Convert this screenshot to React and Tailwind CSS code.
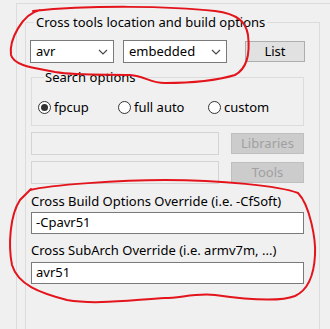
import React from 'react';

const Chevron = () => (
    <svg width="10" height="6" viewBox="0 0 10 6" className="shrink-0">
        <polyline points="1,1 5,5 9,1" fill="none" stroke="#444" strokeWidth="1.1" />
    </svg>
);

const Combo = ({ value, width }) => (
    <div className={`flex items-center justify-between h-[23px] ${width} bg-white border border-[#7a7a7a] pl-[5px] pr-[5px]`}>
        <span>{value}</span>
        <Chevron />
    </div>
);

const Radio = ({ checked, label, width }) => (
    <label className={`flex items-center ${width}`}>
        <span className="w-[13px] h-[13px] rounded-full border border-[#333] bg-white flex items-center justify-center shrink-0">
            {checked && <span className="w-[7px] h-[7px] rounded-full bg-[#333]" />}
        </span>
        <span className="ml-[3px]">{label}</span>
    </label>
);

const DisabledRow = ({ label }) => (
    <div className="flex items-center">
        <div className="w-[188px] h-[23px] border border-[#d4d4d4] bg-[#f0f0f0]" />
        <button className="ml-[12px] w-[73px] h-[21px] bg-[#cccccc] border border-[#bfbfbf] text-[#a0a0a0] leading-none">
            {label}
        </button>
    </div>
);

const App = () => {
    return (
        <div className="relative w-[330px] h-[329px] overflow-hidden bg-[#f0f0f0] text-[13px] text-black font-['Noto_Sans',sans-serif]">
            <div className="h-full pl-[16px] pt-[3px]">
                <div className="h-[400px] border-l border-t border-[#dcdcdc] pl-[8px] pt-[10px]">
                    <fieldset className="w-[295px] h-[400px] border border-[#dcdcdc] pl-[5px]">
                        <legend className="ml-[3px] px-[2px] leading-[17px]">Cross tools location and build options</legend>

                        <div className="flex items-center mt-[9px] -ml-[1px]">
                            <Combo value="avr" width="w-[84px]" />
                            <div className="w-[9px]" />
                            <Combo value="embedded" width="w-[104px]" />
                            <button className="ml-[18px] w-[60px] h-[21px] bg-[#e1e1e1] border border-[#adadad] leading-none">List</button>
                        </div>

                        <fieldset className="mt-[6px] w-[273px] h-[57px] border border-[#dcdcdc] pl-[6px]">
                            <legend className="ml-[6px] px-[1px] leading-[17px]">Search options</legend>
                            <div className="flex items-center mt-[12px]">
                                <Radio checked label="fpcup" width="w-[80px]" />
                                <Radio label="full auto" width="w-[90px]" />
                                <Radio label="custom" width="w-[80px]" />
                            </div>
                        </fieldset>

                        <div className="mt-[6px] flex flex-col gap-[6px]">
                            <DisabledRow label="Libraries" />
                            <DisabledRow label="Tools" />
                        </div>

                        <div className="mt-[9px] leading-[17px]">Cross Build Options Override (i.e. -CfSoft)</div>
                        <div className="mt-[2px] w-[273px] h-[22px] bg-white border border-[#7a7a7a] pl-[4px] flex items-center">-Cpavr51</div>

                        <div className="mt-[8px] leading-[17px]">Cross SubArch Override (i.e. armv7m, ...)</div>
                        <div className="mt-[3px] w-[273px] h-[22px] bg-white border border-[#7a7a7a] pl-[4px] flex items-center">avr51</div>
                    </fieldset>
                </div>
            </div>

            <svg className="absolute inset-0 pointer-events-none" width="330" height="329" viewBox="0 0 330 329">
                <path
                    d="M40,10 C22,14 9,40 11,55 C14,66 35,68 55,72 C80,76 110,74 130,75 C145,76 150,83 165,83 C185,83 215,81 235,75 C248,68 250,52 248,35 C246,22 238,14 215,11 C170,6 90,5 33,11"
                    fill="none" stroke="#e3141b" strokeWidth="2" strokeLinecap="round"
                />
                <path
                    d="M30,190 C50,185 120,180 165,180 C220,180 280,186 298,193 C310,205 316,240 315,255 C314,275 308,290 295,296 C280,302 250,300 215,295 C195,293 180,298 165,298 C130,300 95,305 67,300 C40,293 18,285 12,265 C8,245 10,215 20,200 L31,189"
                    fill="none" stroke="#e3141b" strokeWidth="2" strokeLinecap="round"
                />
            </svg>
        </div>
    );
};

export default App;
